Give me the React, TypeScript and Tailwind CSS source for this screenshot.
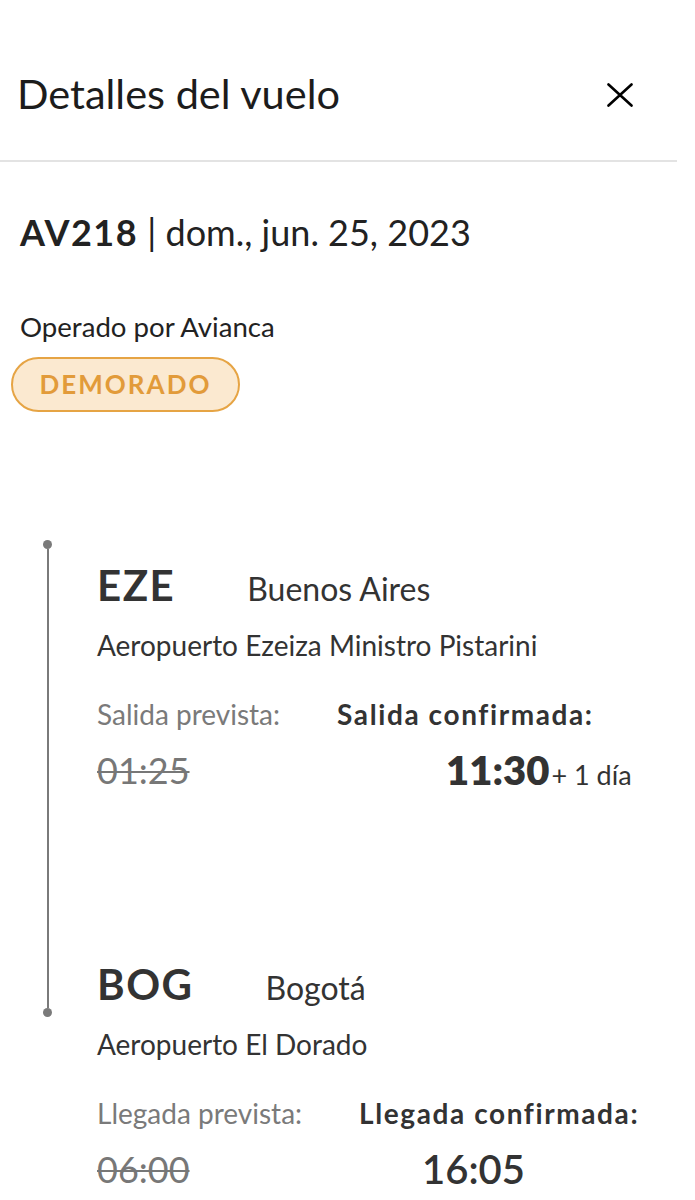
type Stop = {
  code: string;
  city: string;
  airport: string;
  plannedLabel: string;
  planned: string;
  confirmedLabel: string;
  confirmed: string;
  extra?: string;
  timeIndent: string;
};

const departure: Stop = {
  code: "EZE",
  city: "Buenos Aires",
  airport: "Aeropuerto Ezeiza Ministro Pistarini",
  plannedLabel: "Salida prevista:",
  planned: "01:25",
  confirmedLabel: "Salida confirmada:",
  confirmed: "11:30",
  extra: "+ 1 día",
  timeIndent: "pl-[109px]",
};

const arrival: Stop = {
  code: "BOG",
  city: "Bogotá",
  airport: "Aeropuerto El Dorado",
  plannedLabel: "Llegada prevista:",
  planned: "06:00",
  confirmedLabel: "Llegada confirmada:",
  confirmed: "16:05",
  timeIndent: "pl-[63px]",
};

function StopBlock({ stop, heavy }: { stop: Stop; heavy: boolean }) {
  return (
    <div>
      <div className="flex items-baseline gap-[72px] text-[#333]">
        <span className="text-[42px] leading-[50px] font-bold tracking-[1.5px]">{stop.code}</span>
        <span className="text-[32px] leading-[38px]">{stop.city}</span>
      </div>
      <div className="mt-[18px] text-[28px] leading-[34px] text-[#333]">{stop.airport}</div>
      <div className="mt-[35px] flex gap-[57px]">
        <div>
          <div className="text-[28px] leading-[34px] text-[#7a7a7a]">{stop.plannedLabel}</div>
          <div className="mt-[17px] text-[36px] leading-[44px] text-[#777] line-through decoration-2">
            {stop.planned}
          </div>
        </div>
        <div>
          <div className="text-[28px] leading-[34px] font-bold tracking-[1.6px] text-[#333]">
            {stop.confirmedLabel}
          </div>
          <div className={`mt-[17px] flex items-baseline text-[#333] ${stop.timeIndent}`}>
            <span className={`text-[40px] leading-[44px] ${heavy ? "font-extrabold" : "font-semibold"}`}>
              {stop.confirmed}
            </span>
            {stop.extra && <span className="ml-[2px] text-[27px] leading-[30px]">{stop.extra}</span>}
          </div>
        </div>
      </div>
    </div>
  );
}

export default function App() {
  return (
    <div className="w-[677px] min-h-[1200px] bg-white font-['Lato','Liberation_Sans',sans-serif] overflow-hidden">
      {/* header */}
      <div className="h-[162px] border-b-2 border-[#e3e3e3] pl-[17px] pr-[18px] pt-[69px] flex justify-between items-start">
        <h1 className="text-[41.5px] leading-[48px] text-[#1c1c1c]">Detalles del vuelo</h1>
        <button className="mt-[14px] mr-[26px] text-black" aria-label="Cerrar">
          <svg width="26" height="24" viewBox="0 0 26 24" fill="none" stroke="currentColor" strokeWidth="2.6" strokeLinecap="round">
            <path d="M1.5 1.5 24.5 22.5M24.5 1.5 1.5 22.5" />
          </svg>
        </button>
      </div>

      {/* flight summary */}
      <div className="px-[20px] pt-[48px]">
        <div className="text-[36px] leading-[44px] text-[#222]">
          <span className="font-bold tracking-[1.5px]">AV218</span> | dom., jun. 25, 2023
        </div>
        <div className="mt-[56px] text-[27.6px] leading-[34px] text-[#222]">Operado por Avianca</div>
      </div>
      <div className="ml-[11px] mt-[13px] w-[229px] h-[55px] rounded-full border-2 border-[#e6a444] bg-[#fbe9d0] flex items-center justify-center">
        <span className="text-[26px] font-bold tracking-[2px] text-[#e29b3a]">DEMORADO</span>
      </div>

      {/* itinerary */}
      <div className="mt-[128px] flex items-start">
        <div className="ml-[43px] w-[9px] h-[477px] flex flex-col items-center">
          <div className="w-[9px] h-[9px] rounded-full bg-[#7a7a7a]" />
          <div className="w-[2px] flex-1 bg-[#7a7a7a]" />
          <div className="w-[9px] h-[9px] rounded-full bg-[#7a7a7a]" />
        </div>
        <div className="ml-[45px] pt-[20px]">
          <StopBlock stop={departure} heavy />
          <div className="h-[167px]" />
          <StopBlock stop={arrival} heavy={false} />
        </div>
      </div>
    </div>
  );
}
